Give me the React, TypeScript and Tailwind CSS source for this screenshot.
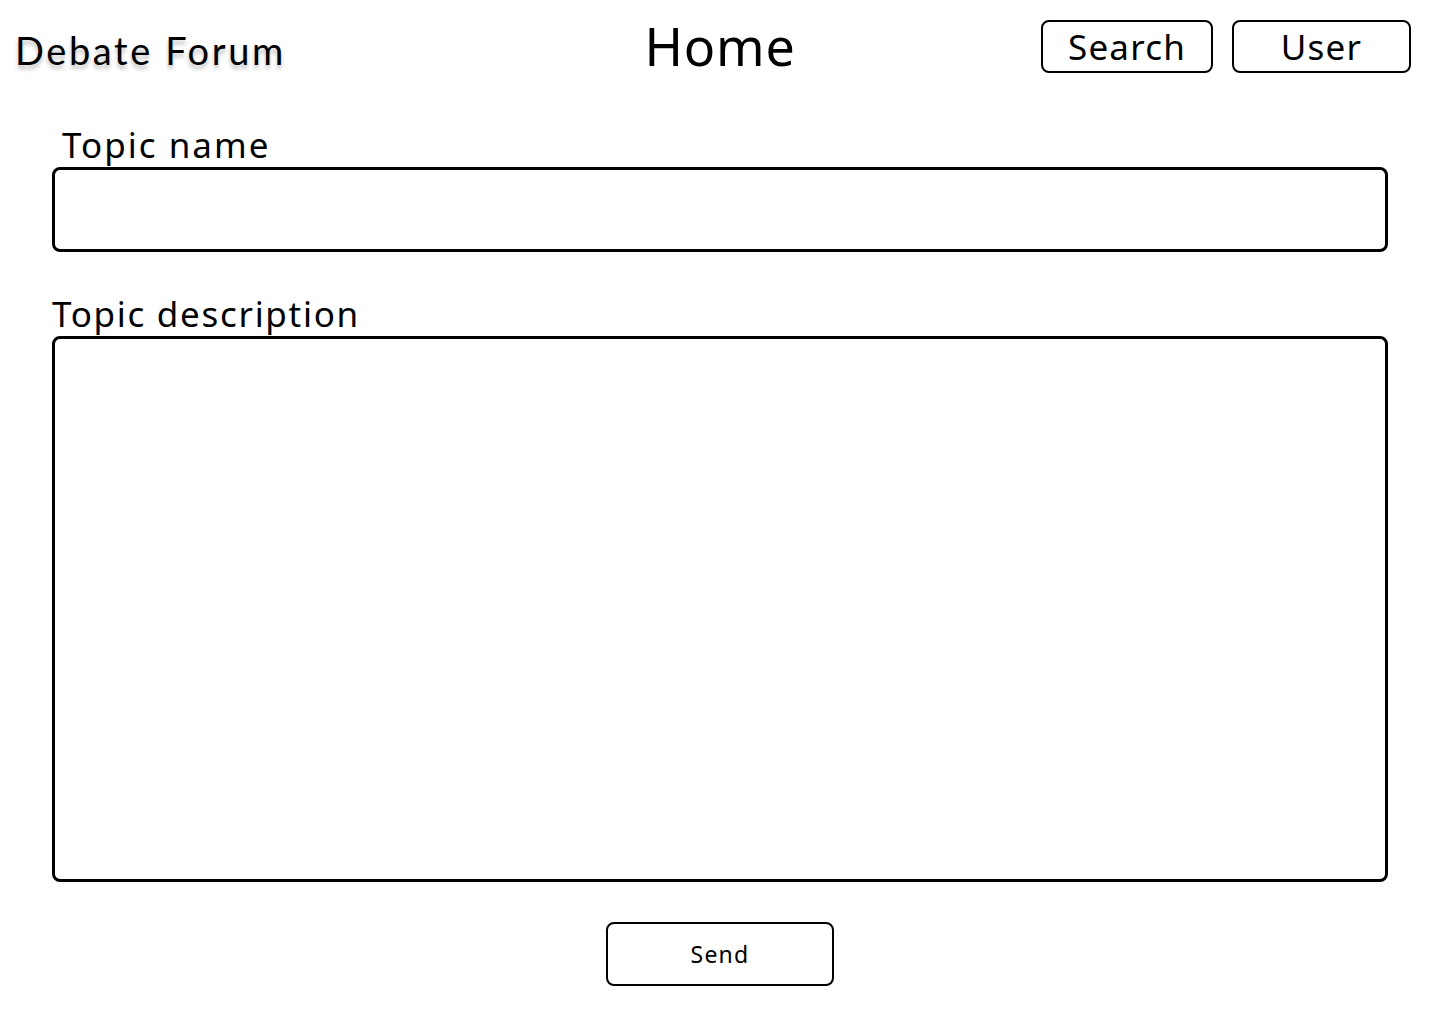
export default function App() {
  return (
    <div className="min-h-screen w-full bg-white text-black font-['Noto_Sans',sans-serif]">
      <header className="grid grid-cols-[1fr_auto_1fr] items-start pt-5">
        <div
          className="pl-[15px] translate-y-[4px] text-[38px] leading-[52px] tracking-[2.6px] font-['Lato',sans-serif]"
          style={{ textShadow: "0 4px 4px rgba(0,0,0,0.25)" }}
        >
          Debate Forum
        </div>
        <h1 className="text-[52px] leading-[52px] tracking-[0.8px]">Home</h1>
        <div className="flex justify-end gap-[19px] pr-[29px]">
          <button className="h-[53px] w-[172px] rounded-lg border-2 border-black text-[35px] leading-none tracking-[1.2px]">
            Search
          </button>
          <button className="h-[53px] w-[179px] rounded-lg border-2 border-black text-[35px] leading-none tracking-[1.2px]">
            User
          </button>
        </div>
      </header>

      <main className="flex flex-col px-[52px]">
        <label className="mt-[51px] ml-[10px] text-[35px] leading-[42px] tracking-[2px]">Topic name</label>
        <input
          type="text"
          className="mt-[1px] h-[85px] w-[1336px] rounded-lg border-[3px] border-black px-4 text-2xl outline-none"
        />

        <label className="mt-[41px] text-[35px] leading-[42px] tracking-[1.7px]">Topic description</label>
        <textarea className="mt-[1px] h-[546px] w-[1336px] resize-none rounded-lg border-[3px] border-black p-4 text-2xl outline-none" />

        <div className="flex justify-center pt-[40px]">
          <button className="h-[64px] w-[228px] rounded-lg border-2 border-black text-[23px] leading-none tracking-[1.2px]">
            Send
          </button>
        </div>
      </main>
    </div>
  );
}
